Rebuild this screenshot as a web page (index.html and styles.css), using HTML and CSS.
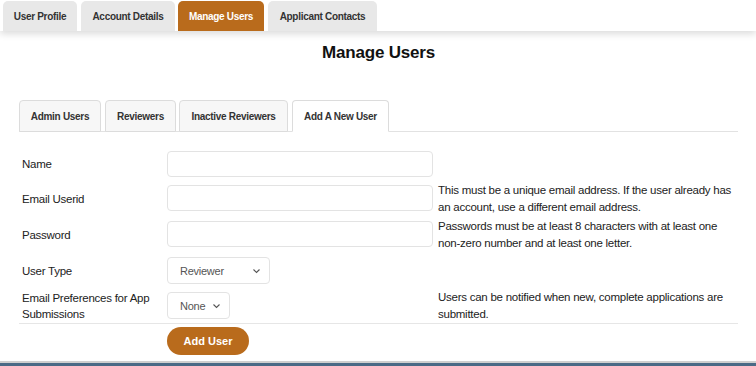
FILE: index.html
```html
<!DOCTYPE html>
<html lang="en">
<head>
  <meta charset="UTF-8" />
  <meta name="viewport" content="width=device-width, initial-scale=1" />
  <title>Manage Users</title>
  <link rel="stylesheet" href="styles.css">
</head>
<body>

  <nav class="main-tabs">
    <a class="main-tab tab-profile">User Profile</a>
    <a class="main-tab tab-account">Account Details</a>
    <a class="main-tab tab-manage active">Manage Users</a>
    <a class="main-tab tab-contacts">Applicant Contacts</a>
  </nav>

  <main>
    <h2>Manage Users</h2>

    <div class="sub-tabs">
      <a class="sub-tab tab-admin">Admin Users</a>
      <a class="sub-tab tab-reviewers">Reviewers</a>
      <a class="sub-tab tab-inactive">Inactive Reviewers</a>
      <a class="sub-tab tab-new active">Add A New User</a>
    </div>

    <form class="user-form">
      <div class="form-row">
        <label>Name</label>
        <div class="field"><input type="text" class="text-input" /></div>
        <div class="help"></div>
      </div>
      <div class="form-row tall">
        <label>Email Userid</label>
        <div class="field"><input type="text" class="text-input" /></div>
        <div class="help">This must be a unique email address. If the user already has an account, use a different email address.</div>
      </div>
      <div class="form-row tall">
        <label>Password</label>
        <div class="field"><input type="password" class="text-input" /></div>
        <div class="help">Passwords must be at least 8 characters with at least one non-zero number and at least one letter.</div>
      </div>
      <div class="form-row">
        <label>User Type</label>
        <div class="field">
          <div class="select select-type">
            <span>Reviewer</span>
            <svg width="9" height="6" viewBox="0 0 9 6"><path d="M1.5 1.5l3 3 3-3" fill="none" stroke="#555" stroke-width="1.1"/></svg>
          </div>
        </div>
        <div class="help"></div>
      </div>
      <div class="form-row tall last">
        <label>Email Preferences for App Submissions</label>
        <div class="field">
          <div class="select select-pref">
            <span>None</span>
            <svg width="9" height="6" viewBox="0 0 9 6"><path d="M1.5 1.5l3 3 3-3" fill="none" stroke="#555" stroke-width="1.1"/></svg>
          </div>
        </div>
        <div class="help">Users can be notified when new, complete applications are submitted.</div>
      </div>
      <div class="form-actions">
        <button type="button" class="btn-add">Add User</button>
      </div>
    </form>
  </main>

  <div class="window-edge"></div>

</body>
</html>
```

FILE: styles.css
```css
* {
  box-sizing: border-box;
}
html, body {
  height: 100%;
}
body {
  margin: 0;
  font-family: "Liberation Sans", Arial, sans-serif;
  background: #fff;
  color: #222;
  display: flex;
  flex-direction: column;
  overflow: hidden;
}

/* top tabs */
.main-tabs {
  display: flex;
  align-items: flex-end;
  height: 31px;
  padding-left: 3px;
  gap: 4px;
  background: #fff;
  box-shadow: 0 3px 7px rgb(0 0 0 / 0.14);
  position: relative;
  z-index: 2;
}
.main-tab {
  height: 30px;
  display: flex;
  align-items: center;
  justify-content: center;
  background: #e8e8e8;
  border-radius: 5px 5px 0 0;
  font-size: 10px;
  letter-spacing: -0.3px;
  font-weight: 700;
  color: #333;
}
.tab-profile { width: 74px; }
.tab-account { width: 94px; }
.tab-manage { width: 86px; margin-left: -1px; }
.tab-contacts { width: 109px; }
.main-tab.active {
  background: #b96b1c;
  color: #fff;
}

main {
  flex: 1;
  padding: 0 18px 0 19px;
}
h2 {
  margin: 11px 0 36px;
  text-align: center;
  font-size: 17px;
  letter-spacing: -0.2px;
  line-height: 22px;
  font-weight: 700;
  color: #111;
}

/* inner tabs */
.sub-tabs {
  display: flex;
  gap: 4px;
  border-bottom: 1px solid #e2e2e2;
  height: 32px;
}
.sub-tab {
  height: 32px;
  display: flex;
  align-items: center;
  justify-content: center;
  background: #f7f7f7;
  border: 1px solid #dcdcdc;
  border-radius: 4px 4px 0 0;
  font-size: 10px;
  letter-spacing: -0.3px;
  font-weight: 700;
  color: #333;
}
.tab-admin { width: 82px; }
.tab-reviewers { width: 71px; }
.tab-inactive { width: 109px; margin-left: -1px; }
.tab-new { width: 97px; }
.sub-tab.active {
  background: #fff;
  border-bottom-color: #fff;
}

/* form */
.user-form {
  margin-top: 15px;
  font-size: 11.5px;
  letter-spacing: -0.25px;
  color: #222;
}
.form-row {
  display: grid;
  grid-template-columns: 148px 271px 1fr;
  align-items: center;
  min-height: 34px;
}
.form-row.tall {
  min-height: 36px;
}
.form-row.last {
  border-bottom: 1px solid #e6e6e6;
}
.form-row label {
  padding-left: 3px;
  line-height: 16px;
  padding-right: 8px;
}
.field {
  align-self: start;
  padding: 4px 0;
}
.text-input {
  display: block;
  width: 266px;
  height: 26px;
  border: 1px solid #e3e3e3;
  border-radius: 4px;
  background: #fff;
  font: inherit;
}
.select {
  height: 27px;
  border: 1px solid #e3e3e3;
  border-radius: 4px;
  display: flex;
  align-items: center;
  justify-content: space-between;
  padding: 0 8px 0 12px;
  color: #555;
  font-size: 11px;
}
.select-type { width: 103px; }
.select-pref { width: 63px; }
.help {
  line-height: 17px;
  color: #222;
}

.form-actions {
  padding: 3px 0 0 148px;
}
.btn-add {
  width: 82px;
  height: 28px;
  border: none;
  border-radius: 14px;
  background: #b96b1c;
  color: #fff;
  font-family: inherit;
  font-size: 11px;
  font-weight: 700;
}

.window-edge {
  height: 5px;
  border-top: 2px solid #cfcfcf;
  background: #4a6a86;
}
```
